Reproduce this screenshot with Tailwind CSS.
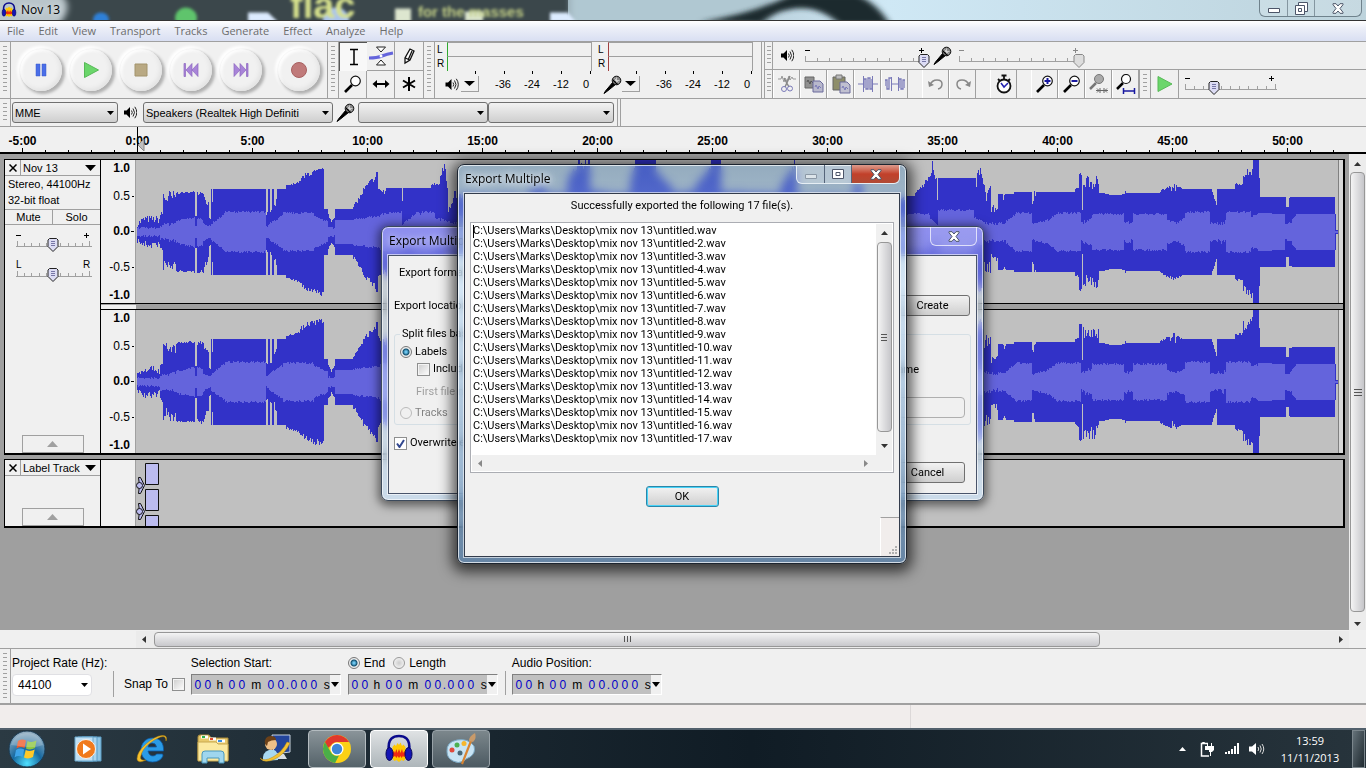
<!DOCTYPE html>
<html lang="en">
<head>
  <meta charset="UTF-8" />
  <meta name="viewport" content="width=device-width, initial-scale=1.0" />
  <title>Nov 13</title>
  <script src="https://cdn.jsdelivr.net/npm/@tailwindcss/browser@4"></script>
</head>
<body class="relative flex h-screen flex-col overflow-hidden bg-[#f0f0f0] font-['Liberation_Sans',sans-serif] text-[12px] leading-[14px] text-black">

  <!-- Shared symbols -->
  <svg class="hidden">
    <symbol id="speaker" viewBox="0 0 13 13">
      <path d="M0 4.500h2.500L6 1v11L2.500 8.500H0z" fill="#000" />
      <path d="M7.500 4.500q1.500 2 0 4M9 2.500q3 4 0 8M10.800 .8q4 5.700 0 11.400" fill="none" stroke="#222" stroke-width="1" />
    </symbol>
    <symbol id="mic" viewBox="0 0 19 19">
      <path d="M1 18.500 2.500 16 10 7l2.500 2.500L4.500 16z" fill="#000" stroke="#000" />
      <circle cx="13.500" cy="5.500" r="4.300" fill="#888" stroke="#111" />
      <path d="M10.500 5.500h6M13.500 2.500v6M11.500 3.500l4 4" stroke="#ddd" stroke-width=".8" />
      <path d="M10 5l4.500 4.500" stroke="#000" stroke-width="1.300" />
    </symbol>
    <symbol id="thumb" viewBox="0 0 12 14">
      <path d="M2.500.5h7l1.500 1.500v6.500L6 13.500 1 8.500V2z" fill="#dcdcf4" stroke="#222" />
      <path d="M4 3.500h4M4 5.500h4M4 7.500h4" stroke="#7777a8" />
    </symbol>
    <symbol id="thumb-off" viewBox="0 0 12 14">
      <path d="M2.500.5h7l1.500 1.500v6.500L6 13.500 1 8.500V2z" fill="#ddd" stroke="#888" />
    </symbol>
    <symbol id="arrow" viewBox="0 0 7 4"><path d="M0 0h7L3.500 4z" fill="#000" /></symbol>
    <symbol id="lens" viewBox="0 0 20 20">
      <path d="M2 18l7-7" stroke="#000" stroke-width="2.600" />
      <circle cx="12.500" cy="7" r="4.800" fill="#fff" stroke="#111" stroke-width="1.200" />
    </symbol>
    <symbol id="audacity" viewBox="0 0 30 30">
      <path d="M5 17C3 4 10 2 15 2s12 2 10 15" fill="none" stroke="#0a0a8c" stroke-width="2.600" />
      <path d="M8.500 13l2-2.500 1.500 1.500 1.500-3L15 11l1.500-2.500L18 12l1.500-1.500 2 2.500v12l-2 2-2-1-2.500 2-2.500-2-2 1-2-2z" fill="#ffc800" />
      <path d="M8 19l2-2 1 2 1.500-4 1 4 1.500-4 1.500 4 1.500-4 1 4 1.500-2 1 2v3l-1.500 1-1-1-1.500 2-1-2-1.500 2-1.500-2-1 2-1.500-2-2 1-1-1z" fill="#f02a10" />
      <ellipse cx="5.500" cy="20" rx="3.500" ry="6.500" fill="#1414b4" stroke="#05055a" />
      <ellipse cx="24.500" cy="20" rx="3.500" ry="6.500" fill="#1414b4" stroke="#05055a" />
    </symbol>
    <symbol id="close" viewBox="0 0 12 11">
      <path d="M1 .7h3L6 3 8 .7h3v1L8 5.500l3 3.800v1H8L6 8l-2 2.300H1v-1l3-3.800-3-3.800z" fill="#fff" stroke="#4c5568" />
    </symbol>
  </svg>

  <!-- Title bar -->
  <header class="relative flex h-[21px] shrink-0 items-center overflow-hidden border-b border-[#333] bg-linear-to-r from-[#4a565a] via-[#cfe8f5] via-65% to-[#bdd3dc]">
    <svg class="absolute inset-0 h-full w-full" viewBox="0 0 1366 21" preserveAspectRatio="none">
      <defs>
        <filter id="b3" x="-30%" y="-80%" width="160%" height="260%"><feGaussianBlur stdDeviation="3" /></filter>
        <filter id="b2" x="-30%" y="-80%" width="160%" height="260%"><feGaussianBlur stdDeviation="1.500" /></filter>
      </defs>
      <path d="M0 0h568v21H0z" fill="#3b474b" />
      <path d="M571-10h200v41H571z" fill="#b0c8d2" filter="url(#b3)" />
      <path d="M-10-10H55q25 15 0 40H-10z" fill="#b9c5ca" filter="url(#b3)" />
      <g filter="url(#b2)">
        <circle cx="101" cy="21" r="8" fill="#2f80d8" />
        <circle cx="186" cy="19" r="11" fill="#5fc46c" />
        <path d="M248 13h20l10 10h-30zM550 13h18l8 10h-26z" fill="#dcebff" />
        <circle cx="336" cy="21" r="13" fill="#a9c3ee" />
        <text x="290" y="19" font-size="38" font-weight="bold" fill="#d5e08c" font-family="Liberation Sans">flac</text>
        <path d="M395 9h16v14h-16zM465 12h18v10h-18z" fill="#dde6cf" />
        <text x="418" y="18" font-size="15" font-weight="bold" fill="#c3cf86" font-family="Liberation Sans">for the masses</text>
      </g>
      <path d="M700 23Q755 14 792-6h64q22 10 34 32h-50Q820 6 795 9q-22 3-34 16z" fill="#1f2b2e" filter="url(#b3)" />
    </svg>
    <svg class="relative ml-[1px] h-4 w-4"><use href="#audacity" /></svg>
    <h1 class="relative ml-1 font-['Open_Sans',sans-serif] text-[12px] [text-shadow:0_0_6px_#fff]">Nov 13</h1>
    <div class="relative mr-1 ml-auto flex h-[17px] self-start rounded-b-md border border-t-0 border-[#6f828c] bg-white/15">
      <button aria-label="Minimize" class="grid w-7 place-items-center border-r border-[#8496a0]"><svg class="mt-1 h-[5px] w-3"><path d="M.5.5h11v4H.5z" fill="#fff" stroke="#4c5568" /></svg></button>
      <button aria-label="Restore" class="grid w-[27px] place-items-center border-r border-[#8496a0]"><svg class="h-[13px] w-[13px]"><path d="M3.500.5h9v9h-9z" fill="#fff" stroke="#4c5568" /><path d="M.5 3.500h9v9h-9zM3.500 6.500h3v3h-3z" fill="#fff" stroke="#4c5568" /></svg></button>
      <button aria-label="Close" class="grid w-[46px] place-items-center"><svg class="h-[11px] w-3"><use href="#close" /></svg></button>
    </div>
  </header>

  <!-- Menu -->
  <nav class="flex h-[21px] shrink-0 items-center gap-[14px] border-b border-[#a0a0a0] bg-linear-to-b from-white via-[#eceff8] via-35% to-[#d9dff2] pl-[7px] font-['Open_Sans',sans-serif] text-[11px] text-[#6d6d6d]">
    <a href="#">File</a><a href="#">Edit</a><a href="#">View</a><a href="#">Transport</a><a href="#">Tracks</a><a href="#">Generate</a><a href="#">Effect</a><a href="#">Analyze</a><a href="#">Help</a>
  </nav>

  <!-- Toolbars -->
  <div class="flex h-[57px] shrink-0 border-b border-[#a0a0a0]">
    <div class="flex w-[11px] justify-center border-r border-[#a0a0a0] py-1"><i class="w-1 bg-[repeating-linear-gradient(#a0a0a0_0_1px,#f0f0f0_1px_4px)]"></i></div>
    <div id="transport" class="flex items-center border-r border-[#a0a0a0] pr-[3px] pl-[5px]"></div>
    <div class="flex w-[11px] justify-center border-r border-[#a0a0a0] py-1"><i class="w-1 bg-[repeating-linear-gradient(#a0a0a0_0_1px,#f0f0f0_1px_4px)]"></i></div>
    <div class="grid grid-cols-3 border-r border-[#a0a0a0]">
      <button aria-label="Selection tool" class="grid w-7 place-items-center border-t border-l border-[#555] bg-[#f8f8f8]"><svg class="h-5 w-5"><path d="M6 2.500h8M6 17.500h8M10 2v16" stroke="#000" stroke-width="1.500" /></svg></button>
      <button aria-label="Envelope tool" class="grid w-7 place-items-center border-r border-b border-[#a0a0a0]"><svg class="h-5 w-[26px]"><path d="M1 12q8 0 13-2t11-3" fill="none" stroke="#6464dc" stroke-width="3" /><path d="M8.500 1h9L13 6zM8.500 19h9L13 14z" fill="#fff" stroke="#222" /><circle cx="13" cy="10" r="1.500" fill="#fff" /></svg></button>
      <button aria-label="Draw tool" class="grid w-7 place-items-center border-b border-[#a0a0a0]"><svg class="h-5 w-5"><path d="M6 17V12l5-9 4 2-4 9zM6.500 12l4 2M9.500 13 13 5" fill="#fff" stroke="#111" stroke-width="1.300" /></svg></button>
      <button aria-label="Zoom tool" class="grid w-7 place-items-center border-r border-[#a0a0a0]"><svg class="h-5 w-5"><use href="#lens" /></svg></button>
      <button aria-label="Time shift tool" class="grid w-7 place-items-center border-r border-[#a0a0a0]"><svg class="h-5 w-5"><path d="M3 10h14" stroke="#000" stroke-width="2" /><path d="M1.500 10 6 6v8zM18.500 10 14 6v8z" /></svg></button>
      <button aria-label="Multi tool" class="grid w-7 place-items-center"><svg class="h-5 w-5"><path d="M10 3v14M4 6.500l12 7M4 13.500l12-7" stroke="#000" stroke-width="2" /></svg></button>
    </div>
    <div class="flex w-[11px] justify-center border-r border-[#a0a0a0] py-1"><i class="w-1 bg-[repeating-linear-gradient(#a0a0a0_0_1px,#f0f0f0_1px_4px)]"></i></div>
    <div id="meters" class="flex border-r border-[#a0a0a0] pr-[2px] pl-[2px]"></div>
    <div class="ml-[2px] flex flex-1 flex-col border-l border-[#a0a0a0]">
      <div class="flex h-7 items-center border-b border-[#a0a0a0]">
        <div class="flex w-2 justify-center self-stretch border-r border-[#a0a0a0] py-1"><i class="w-1 bg-[repeating-linear-gradient(#a0a0a0_0_1px,#f0f0f0_1px_4px)]"></i></div>
        <svg class="ml-2 h-[13px] w-[13px]"><use href="#speaker" /></svg>
        <div class="ml-2 grid">
          <svg class="col-start-1 row-start-1 h-6 w-[128px]"><path d="M3 17.500h115M3.500 12v5M15.500 14v3M27.500 14v3M39.500 14v3M51.500 14v3M63.500 14v3M75.500 14v3M87.500 14v3M99.500 14v3M111.500 14v3" stroke="#a0a0a0" /><path d="M3 6.500h5M117 6.500h5M119.500 4v5" stroke="#000" /><use href="#thumb" x="116" y="10" width="12" height="14" /></svg>
          <input type="range" aria-label="Output volume" value="100" class="col-start-1 row-start-1 w-full opacity-0" />
        </div>
        <svg class="ml-[2px] h-[19px] w-[19px]"><use href="#mic" /></svg>
        <div class="ml-1 grid">
          <svg class="col-start-1 row-start-1 h-6 w-[130px]"><path d="M3 17.500h115M3.500 12v5M15.500 14v3M27.500 14v3M39.500 14v3M51.500 14v3M63.500 14v3M75.500 14v3M87.500 14v3M99.500 14v3M111.500 14v3" stroke="#a0a0a0" /><path d="M3 6.500h5M117 6.500h5M119.500 4v5" stroke="#888" /><use href="#thumb-off" x="117" y="10" width="12" height="14" /></svg>
          <input type="range" aria-label="Input volume" value="100" disabled class="col-start-1 row-start-1 w-full opacity-0" />
        </div>
      </div>
      <div class="flex h-7">
        <div class="flex w-2 justify-center border-r border-[#a0a0a0] py-1"><i class="w-1 bg-[repeating-linear-gradient(#a0a0a0_0_1px,#f0f0f0_1px_4px)]"></i></div>
        <div id="edit" class="flex"></div>
        <div class="flex w-3 justify-center border-x border-[#a0a0a0] py-1"><i class="w-1 bg-[repeating-linear-gradient(#a0a0a0_0_1px,#f0f0f0_1px_4px)]"></i></div>
        <button aria-label="Play at speed" class="grid w-7 place-items-center border-r border-[#a0a0a0]"><svg class="h-4 w-4"><path d="M1 .5v15L15 8z" fill="#6bd66b" stroke="#57b957" /></svg></button>
        <div class="ml-1 grid">
          <svg class="col-start-1 row-start-1 h-7 w-[96px]"><path d="M2 19.500h92M2.500 14v5M11.500 16v3M20.500 16v3M29.500 16v3M38.500 16v3M47.500 16v3M56.500 16v3M65.500 16v3M74.500 16v3M83.500 16v3M92.500 14v5" stroke="#a0a0a0" /><path d="M2 8.500h5M86 8.500h5M88.500 6v5" stroke="#000" /><use href="#thumb" x="25" y="11" width="12" height="14" /></svg>
          <input type="range" aria-label="Playback speed" value="30" class="col-start-1 row-start-1 w-full opacity-0" />
        </div>
      </div>
    </div>
  </div>

  <!-- Device toolbar -->
  <div class="flex h-7 shrink-0 items-center border-b border-[#a0a0a0] text-[11px]">
    <div class="mr-[1px] flex w-[11px] justify-center self-stretch border-r border-[#a0a0a0] py-1"><i class="w-1 bg-[repeating-linear-gradient(#a0a0a0_0_1px,#f0f0f0_1px_4px)]"></i></div>
    <div class="grid items-center">
      <select aria-label="Audio host" class="col-start-1 row-start-1 h-[21px] w-[106px] appearance-none rounded-[3px] border border-[#707070] bg-linear-to-b from-[#f2f2f2] to-[#cfcfcf] pl-[2px]"><option>MME</option></select>
      <svg class="pointer-events-none col-start-1 row-start-1 mr-1 h-1 w-[7px] justify-self-end"><use href="#arrow" /></svg>
    </div>
    <svg class="mx-[6px] h-[13px] w-[13px]"><use href="#speaker" /></svg>
    <div class="grid items-center">
      <select aria-label="Output device" class="col-start-1 row-start-1 h-[21px] w-[190px] appearance-none rounded-[3px] border border-[#707070] bg-linear-to-b from-[#f2f2f2] to-[#cfcfcf] pl-[2px]"><option>Speakers (Realtek High Definiti</option></select>
      <svg class="pointer-events-none col-start-1 row-start-1 mr-1 h-1 w-[7px] justify-self-end"><use href="#arrow" /></svg>
    </div>
    <svg class="mx-[3px] h-[19px] w-[19px]"><use href="#mic" /></svg>
    <div class="grid items-center">
      <select aria-label="Input device" class="col-start-1 row-start-1 h-[21px] w-[130px] appearance-none rounded-[3px] border border-[#707070] bg-linear-to-b from-[#f2f2f2] to-[#cfcfcf]"></select>
      <svg class="pointer-events-none col-start-1 row-start-1 mr-1 h-1 w-[7px] justify-self-end"><use href="#arrow" /></svg>
    </div>
    <div class="grid items-center">
      <select aria-label="Input channels" class="col-start-1 row-start-1 h-[21px] w-[126px] appearance-none rounded-[3px] border border-[#707070] bg-linear-to-b from-[#f2f2f2] to-[#cfcfcf]"></select>
      <svg class="pointer-events-none col-start-1 row-start-1 mr-1 h-1 w-[7px] justify-self-end"><use href="#arrow" /></svg>
    </div>
    <div class="ml-[3px] w-1 self-stretch border-x border-[#a0a0a0]"></div>
  </div>

  <!-- Timeline -->
  <div class="relative h-[27px] shrink-0 overflow-hidden border-b-2 border-black">
    <div id="timeline" class="-ml-[35px] flex h-full"></div>
    <svg class="absolute top-0 left-[137px] h-full w-2"><path d="M.5 0v27" stroke="#000" /><path d="M7 12v12L1 18z" fill="#c0c0c0" stroke="#888" /></svg>
  </div>

  <!-- Tracks -->
  <main class="flex min-h-0 flex-1 bg-[#9f9f9f]">
    <div class="flex flex-1 flex-col gap-1 pt-[5px] pr-1 pl-1">
      <section class="flex h-[296px] border border-r-2 border-b-2 border-black">
        <div class="flex w-24 shrink-0 flex-col border-r border-black bg-[#f0f0f0] text-[11px]">
          <div class="flex h-4 items-center border-b border-[#a0a0a0]">
            <button aria-label="Close track" class="grid h-full w-4 place-items-center border-r border-[#a0a0a0]"><svg class="h-2 w-2"><path d="M.5.500l7 7M7.500.5l-7 7" stroke="#000" stroke-width="1.500" /></svg></button>
            <button class="flex flex-1 items-center justify-between pr-1 pl-[2px]">Nov 13 <svg class="h-[6px] w-[11px]"><path d="M0 0h11L5.500 6z" /></svg></button>
          </div>
          <p class="h-[33px] pl-[3px] leading-4">Stereo, 44100Hz<br />32-bit float</p>
          <div class="flex h-4 border-y border-[#a0a0a0] leading-[14px]"><button class="flex-1 border-r border-[#a0a0a0]">Mute</button><button class="flex-1">Solo</button></div>
          <div class="mt-[2px] ml-[10px] grid">
            <svg class="col-start-1 row-start-1 h-[30px] w-[80px]"><path d="M1 19.500h76M2.500 14v5M9.500 16v3M16.500 16v3M24.500 16v3M31.500 16v3M45.500 16v3M53.500 16v3M60.500 16v3M67.500 16v3M74.500 14v5" stroke="#a0a0a0" /><path d="M1 8.500h5M69 8.500h5M71.500 6v5" stroke="#000" /><use href="#thumb" x="32" y="11" width="12" height="14" /></svg>
            <input type="range" aria-label="Gain" class="col-start-1 row-start-1 w-full opacity-0" />
          </div>
          <div class="ml-[10px] grid">
            <svg class="col-start-1 row-start-1 h-[30px] w-[80px]" font-size="10"><text x="1" y="11">L</text><text x="68" y="11">R</text><path d="M1 19.500h76M2.500 14v5M9.500 16v3M16.500 16v3M24.500 16v3M31.500 16v3M45.500 16v3M53.500 16v3M60.500 16v3M67.500 16v3M74.500 14v5" stroke="#a0a0a0" /><use href="#thumb" x="32" y="11" width="12" height="14" /></svg>
            <input type="range" aria-label="Pan" class="col-start-1 row-start-1 w-full opacity-0" />
          </div>
          <button aria-label="Collapse track" class="mt-auto grid h-[18px] w-[62px] place-items-center self-center border border-[#a0a0a0]"><svg class="h-[6px] w-[11px]"><path d="M0 6h11L5.500 0z" fill="#a0a0a0" /></svg></button>
        </div>
        <div class="flex min-w-0 flex-1 flex-col bg-[#9f9f9f]">
          <div class="flex h-[144px] border-b border-black">
            <div class="vruler w-[35px] shrink-0 border-r border-[#a0a0a0] bg-[#f0f0f0]"></div>
            <svg class="wave h-full min-w-0 flex-1 bg-[#c0c0c0]" viewBox="136 0 1207 143" preserveAspectRatio="none" shape-rendering="crispEdges"></svg>
          </div>
          <div class="h-[5px]"><div class="h-full w-[35px] border-t border-[#a0a0a0] bg-[#f0f0f0]"></div></div>
          <div class="flex min-h-0 flex-1 border-t border-black">
            <div class="vruler w-[35px] shrink-0 border-r border-[#a0a0a0] bg-[#f0f0f0]"></div>
            <svg class="wave h-full min-w-0 flex-1 bg-[#c0c0c0]" viewBox="136 0 1207 143" preserveAspectRatio="none" shape-rendering="crispEdges"></svg>
          </div>
        </div>
      </section>
      <section class="flex h-[69px] border border-r-2 border-b-2 border-black">
        <div class="flex w-24 shrink-0 flex-col border-r border-black bg-[#f0f0f0] text-[11px]">
          <div class="flex h-4 items-center border-b border-[#a0a0a0]">
            <button aria-label="Close track" class="grid h-full w-4 place-items-center border-r border-[#a0a0a0]"><svg class="h-2 w-2"><path d="M.5.500l7 7M7.500.5l-7 7" stroke="#000" stroke-width="1.500" /></svg></button>
            <button class="flex flex-1 items-center justify-between pr-1 pl-[2px] whitespace-nowrap">Label Track <svg class="h-[6px] w-[11px]"><path d="M0 0h11L5.500 6z" /></svg></button>
          </div>
          <button aria-label="Collapse track" class="mt-auto grid h-[18px] w-[62px] place-items-center self-center border border-[#a0a0a0]"><svg class="h-[6px] w-[11px]"><path d="M0 6h11L5.500 0z" fill="#a0a0a0" /></svg></button>
        </div>
        <div class="w-[35px] border-r border-[#a0a0a0] bg-[#f0f0f0]"></div>
        <div class="flex-1 bg-[#c0c0c0]">
          <svg class="h-full w-6" fill="#bcbcf0" stroke="#111">
            <path d="M9.500 3.500h13v21h-13zM9.500 29.500h13v21h-13zM9.500 55.500h13v21h-13z" />
            <path d="M2.500 17.500h2l4 8-4 8h-2l1-8zM2.500 43.500h2l4 8-4 8h-2l1-8z" /><circle cx="3.500" cy="25.500" r="3" /><circle cx="3.500" cy="51.500" r="3" />
          </svg>
        </div>
      </section>
    </div>
    <div class="flex w-[17px] flex-col items-center bg-[#ececec]">
      <svg class="mt-2 h-[4px] w-[7px]"><path d="M0 4h7L3.500 0z" fill="#333" /></svg>
      <div class="mt-[6px] flex h-[440px] w-[15px] flex-col items-center justify-center gap-[2px] rounded-sm border border-[#979797] bg-linear-to-r from-[#f4f4f4] to-[#c6c6ca]"><i class="h-px w-2 bg-[#555]"></i><i class="h-px w-2 bg-[#555]"></i><i class="h-px w-2 bg-[#555]"></i></div>
      <svg class="mt-auto mb-1 h-[4px] w-[7px]"><path d="M0 0h7L3.500 4z" fill="#333" /></svg>
    </div>
  </main>

  <!-- Horizontal scroll -->
  <div class="flex h-[19px] shrink-0 items-center border-b border-[#a0a0a0] pr-[17px] pl-[136px]">
    <div class="flex h-[17px] flex-1 items-center bg-[#ebebeb]">
      <svg class="mx-[6px] h-[7px] w-1"><path d="M4 0v7L0 3.500z" fill="#333" /></svg>
      <div class="ml-[2px] flex h-[15px] w-[78%] items-center justify-center gap-[2px] rounded-sm border border-[#979797] bg-linear-to-b from-[#f4f4f4] to-[#c8c8cc]"><i class="h-[6px] w-px bg-[#555]"></i><i class="h-[6px] w-px bg-[#555]"></i><i class="h-[6px] w-px bg-[#555]"></i></div>
      <svg class="mr-[6px] ml-auto h-[7px] w-1"><path d="M0 0v7l4-3.500z" fill="#333" /></svg>
    </div>
  </div>

  <!-- Selection toolbar -->
  <div class="flex h-[56px] shrink-0 border-b-2 border-[#a0a0a0]">
    <div class="mr-[1px] flex w-[11px] justify-center border-r border-[#a0a0a0] py-1"><i class="w-1 bg-[repeating-linear-gradient(#a0a0a0_0_1px,#f0f0f0_1px_4px)]"></i></div>
    <div class="w-[101px] pt-[7px]">
      <label for="rate" class="block whitespace-nowrap">Project Rate (Hz):</label>
      <div class="mt-1 grid w-20 items-center">
        <select id="rate" class="col-start-1 row-start-1 h-[22px] w-full appearance-none rounded-sm border border-[#e0e0e4] bg-white pl-[5px]"><option>44100</option></select>
        <svg class="pointer-events-none col-start-1 row-start-1 mr-1 h-1 w-[7px] justify-self-end"><use href="#arrow" /></svg>
      </div>
    </div>
    <div class="mt-[22px] mr-[6px] mb-[6px] flex items-center gap-1 border-l border-[#a0a0a0] pl-[10px]"><label for="snap" class="whitespace-nowrap">Snap To</label><input id="snap" type="checkbox" class="h-[13px] w-[13px] appearance-none border border-[#8e8f8f] bg-linear-to-br from-[#ccc] to-white shadow-[inset_0_0_0_1px_#f4f4f4]" /></div>
    <div class="pt-[7px]"><p>Selection Start:</p><div class="timebox mt-[4px]" data-label="Selection start"></div></div>
    <div class="ml-[7px] pt-[7px]">
      <div class="flex h-[14px] items-center">
        <input id="end" name="range" type="radio" checked class="h-3 w-3 appearance-none rounded-full border border-[#777] bg-[radial-gradient(circle,#6cc5ee_0_1px,#12506f_3px,#eee_4px)]" /><label for="end" class="mr-2 ml-1">End</label>
        <input id="length" name="range" type="radio" class="h-3 w-3 appearance-none rounded-full border border-[#999] bg-radial from-[#ccc] to-white" /><label for="length" class="ml-1">Length</label>
      </div>
      <div class="timebox mt-[4px]" data-label="End"></div>
    </div>
    <div class="mt-[22px] mr-[6px] mb-2 ml-[7px] w-px bg-[#a0a0a0]"></div>
    <div class="pt-[7px]"><p>Audio Position:</p><div class="timebox mt-[4px]" data-label="Audio position"></div></div>
  </div>

  <!-- Status bar -->
  <footer class="flex h-[23px] shrink-0 bg-[#f1edec]"><div class="w-2/3 border-r border-[#dcd8d8]"></div></footer>

  <!-- Taskbar -->
  <div class="flex h-10 shrink-0 items-center border-t-2 border-[#52606c] bg-linear-to-r from-[#2b3a43] via-[#101c25] via-55% to-[#27343c] pl-2 text-white">
    <button aria-label="Start" class="h-[38px] w-[38px]">
      <svg viewBox="0 0 38 38">
        <defs><radialGradient id="orb" cx=".5" cy=".9" r=".9"><stop offset="0" stop-color="#4fe0ff" /><stop offset=".45" stop-color="#1769a0" /><stop offset="1" stop-color="#9db4c4" /></radialGradient></defs>
        <circle cx="19" cy="19" r="18" fill="url(#orb)" stroke="#1b3a52" />
        <path d="M10 11q4-2.500 8-.5l-1.500 7.500q-4-2-8 .5z" fill="#ee5a2a" />
        <path d="M19.500 11q4 2 9-.5L27 18q-4.500 2.500-9 .5z" fill="#8cc63f" />
        <path d="M8 20q4-2.500 8.200-.5L14.500 27q-4-2-8 .5z" fill="#3fa4e8" />
        <path d="M17.700 20q4.500 2 9-.5L25 27q-4.500 2.500-9 .5z" fill="#ffc928" />
        <path d="M3 15Q7 3 19 3t16 12q-8 3-16 2T3 15z" fill="#fff" opacity=".22" />
      </svg>
    </button>
    <button aria-label="Media Player" class="ml-[28px] h-7 w-7">
      <svg viewBox="0 0 28 28"><path d="M8 2h19v24H8z" fill="#8cc4e4" stroke="#5a9cc4" /><path d="M4 2h19v24H4z" fill="#a8d4ee" stroke="#5a9cc4" /><path d="M1 2h18v24H1z" fill="#bfe0f4" stroke="#6aa8cc" /><circle cx="12" cy="14" r="9.500" fill="#f07a1c" stroke="#fff" stroke-width=".8" /><path d="M9 8.500v11l8-5.500z" fill="#fff" /></svg>
    </button>
    <button aria-label="Internet Explorer" class="ml-[33px] h-8 w-8">
      <svg viewBox="0 0 32 32"><path d="M28 23q-3 6-10.500 6C10 29 6 23 6 17S10 5 17.500 5s11.500 5 11 13H13q1 5 5 5 2.500 0 3.500-2h6zM13 14h8.500Q21 10 17 10t-4 4z" fill="#2a9be6" stroke="#0c5ca8" stroke-width=".8" fill-rule="evenodd" /><path d="M31 8q2-6-4-5.500Q20 3 11 11T2 26q1 5 9 1Q5 28 5.500 24 7 16 15 10T28 3.500q3 0 3 4.500z" fill="#f6c02e" stroke="#b8860b" stroke-width=".5" /></svg>
    </button>
    <button aria-label="Explorer" class="ml-[30px] h-8 w-8">
      <svg viewBox="0 0 32 32"><path d="M1 4q0-2 2-2h9l2 3h17v22H1z" fill="#e8c96a" stroke="#a88a3c" /><path d="M4 4h7M12 6h7M20 8h8" stroke="#fff" stroke-width="3" /><path d="M5 4h3" stroke="#2fb04c" stroke-width="2" /><path d="M13 6h3" stroke="#e04a2c" stroke-width="2" /><path d="M21 8h4" stroke="#3a8ee0" stroke-width="2" /><path d="M1 9h18l2 2h10v17H1z" fill="#fbe9a0" stroke="#c8a850" /><path d="M5 30V21q0-3 3-3h16q3 0 3 3v9h-5v-5H10v5z" fill="#9fd6ee" stroke="#4a98bc" /></svg>
    </button>
    <button aria-label="Messenger" class="ml-[30px] h-8 w-8">
      <svg viewBox="0 0 32 32"><path d="M13 2h18v17l-16 2z" fill="#23459c" stroke="#c8d4e0" /><path d="M19 21h6l3 5H17z" fill="#d8dee4" /><path d="M4 28q-1-9 6-11h5q4 1 4 10z" fill="#a8d8f0" /><circle cx="12" cy="11" r="6" fill="#eebf88" /><path d="M6 11q-1-8 6-8 5 0 5 4-5 0-8 2l-1 4z" fill="#6b4018" /><path d="M1 25q4 4 13-1T28 9l3 1q-5 11-15 16-11 5-15-1z" fill="#f4c232" stroke="#b88a18" stroke-width=".5" /></svg>
    </button>
    <div class="ml-[17px] flex gap-1">
      <button aria-label="Chrome" class="grid h-[38px] w-[58px] place-items-center rounded-sm border border-[#b4bcc0] bg-linear-to-b from-[#8a9499] to-[#55636a]">
        <svg class="h-[30px] w-[30px]" viewBox="0 0 30 30"><circle cx="15" cy="15" r="14" fill="#fbd116" /><path d="M2.900 8A14 14 0 0 1 27.100 8H15a7 7 0 0 0-6.100 3.500L6 14z" fill="#e0382c" /><path d="M2.900 8 9 18.500a7 7 0 0 0 8 3L13 28.900A14 14 0 0 1 2.900 8z" fill="#4aae48" /><circle cx="15" cy="15" r="6.500" fill="#fff" /><circle cx="15" cy="15" r="5.200" fill="#3d86d8" /></svg>
      </button>
      <button aria-label="Audacity" class="grid h-[38px] w-[58px] place-items-center rounded-sm border border-white bg-linear-to-b from-[#dfe2e4] to-[#aeb6ba]"><svg class="h-[30px] w-[30px]"><use href="#audacity" /></svg></button>
      <button aria-label="Paint" class="grid h-[38px] w-[58px] place-items-center rounded-sm border border-[#98a2a8] bg-linear-to-b from-[#7c878c] to-[#4c5a62]">
        <svg class="h-8 w-8" viewBox="0 0 32 32"><path d="M2 19Q1 9 12 7t17 6q2 7-4 11-5 2-6 4-6 3-11 0-6-3-6-9z" fill="#c8e4f4" stroke="#7aa8c4" /><circle cx="7" cy="17" r="2.500" fill="#e04a3c" /><circle cx="12" cy="12" r="2.500" fill="#4cb050" /><circle cx="19" cy="10.500" r="2.500" fill="#f6b62c" /><circle cx="15" cy="20" r="2.500" fill="#486878" /><path d="M17 31 26 8" stroke="#d88432" stroke-width="2.200" /><path d="M24 8q0-5 6-8 2 5-2 9z" fill="#c89a6a" /></svg>
      </button>
    </div>
    <svg class="mr-[14px] ml-auto h-1 w-[7px]"><path d="M0 4h7L3.500 0z" fill="#fff" /></svg>
    <svg class="mr-[10px] h-[15px] w-[15px]" viewBox="0 0 15 15"><path d="M8 1.500H4V.5H3v1H1.500V14H9" fill="none" stroke="#fff" stroke-width="1.500" /><path d="M5 4h9v4l-2 2H9V8H5zM7 1h1v3H7zM11 1h1v3h-1zM10 10h1v4h-1z" fill="#fff" /></svg>
    <svg class="mr-[9px] h-3 w-[15px]" fill="#fff"><path d="M0 9h2v2H0zM3 8h2v3H3zM6 6h2v5H6zM9 3h2v8H9zM12 0h2v11h-2z" /></svg>
    <svg class="mr-[14px] h-[14px] w-4" viewBox="0 0 16 14"><path d="M0 4.500h3L7 1v12L3 9.500H0z" fill="#fff" /><path d="M9 5q1.500 2 0 4M11 3.500q2.500 3.500 0 7M13 2q3.500 5 0 10" fill="none" stroke="#ddd" /></svg>
    <div class="w-[62px] text-center font-['Open_Sans',sans-serif] text-[11px] leading-[17px]">13:59<br />11/11/2013</div>
    <button aria-label="Show desktop" class="mr-px ml-[11px] h-[38px] w-[13px] border border-[#7b868c] bg-linear-to-br from-[#66737a] to-[#1f2a30]"></button>
  </div>

  <!-- Export options dialog -->
  <div class="absolute top-[226px] left-[381px] flex h-[275px] w-[603px] flex-col rounded-[7px] border border-[#3c4a5c] bg-linear-to-b from-[#b4b4ff]/55 via-[#cfe6fb]/30 via-15% to-[#cfe6fb]/70 px-[6px] pb-[6px] font-[Roboto,sans-serif] text-[11px] shadow-[0_2px_10px_3px_rgba(0,0,0,0.5),inset_0_0_0_1px_rgba(255,255,255,0.6)] backdrop-blur-[5px]">
    <div class="flex h-7 shrink-0 items-center font-['Open_Sans',sans-serif] text-[12px]">
      <h2 class="ml-px [text-shadow:0_0_6px_#fff]">Export Multiple</h2>
      <button aria-label="Close" class="ml-auto grid h-[19px] w-[47px] place-items-center self-start rounded-b-md border border-t-0 border-white/70 bg-white/10"><svg class="h-[11px] w-3"><use href="#close" /></svg></button>
    </div>
    <div class="flex flex-1 flex-col border border-[#49546a] bg-[#f0f0f0] shadow-[0_0_0_1px_rgba(255,255,255,0.6)]">
      <p class="mt-[10px] ml-[10px]">Export format:</p>
      <div class="mt-[15px] mr-[6px] flex h-[21px] items-center justify-between pl-[5px]"><p>Export location:</p><button class="h-full w-[75px] rounded-[3px] border border-[#707070] bg-linear-to-b from-[#f2f2f2] to-[#cfcfcf]">Create</button></div>
      <fieldset class="mx-[5px] mt-[11px] flex h-[98px] justify-between rounded-[3px] border border-[#d5dfe5] px-[5px]">
        <legend class="h-[14px] px-[2px]">Split files based on:</legend>
        <div>
          <div class="mt-[4px] flex items-center gap-[3px]"><input id="labels" name="split" type="radio" checked class="h-3 w-3 appearance-none rounded-full border border-[#777] bg-[radial-gradient(circle,#6cc5ee_0_1px,#12506f_3px,#eee_4px)]" /><label for="labels">Labels</label></div>
          <div class="mt-[3px] ml-[17px] flex items-center gap-[3px]"><input id="include" type="checkbox" class="h-[13px] w-[13px] appearance-none border border-[#8e8f8f] bg-linear-to-br from-[#ccc] to-white shadow-[inset_0_0_0_1px_#f4f4f4]" /><label for="include">Include audio before first label</label></div>
          <p class="mt-[9px] ml-[16px] text-[#a0a0a0]">First file name:</p>
          <div class="mt-[7px] flex items-center gap-[3px] text-[#838383]"><input id="tracks" name="split" type="radio" disabled class="h-3 w-3 appearance-none rounded-full border border-[#bbb]" /><label for="tracks">Tracks</label></div>
        </div>
        <div class="flex w-[280px] flex-col items-end"><label for="prefix" class="mt-[22px] w-full pr-[46px] text-right">Using Label/Track Name</label><input id="prefix" disabled class="mt-5 h-[21px] w-[150px] rounded-sm border border-[#afafaf]" /></div>
      </fieldset>
      <div class="mt-[11px] ml-[5px] flex items-center gap-[3px]">
        <span class="grid place-items-center"><input id="overwrite" type="checkbox" checked class="col-start-1 row-start-1 h-[13px] w-[13px] appearance-none border border-[#8e8f8f] bg-white" /><svg class="pointer-events-none col-start-1 row-start-1 h-[9px] w-[9px]"><path d="M1 4.500 3.500 8 8 1" fill="none" stroke="#31478f" stroke-width="2" /></svg></span>
        <label for="overwrite">Overwrite existing files</label>
      </div>
      <button class="mt-3 mr-[11px] h-[21px] w-[75px] self-end rounded-[3px] border border-[#707070] bg-linear-to-b from-[#f2f2f2] to-[#cfcfcf]">Cancel</button>
    </div>
  </div>

  <!-- Export result dialog -->
  <div class="absolute top-[164px] left-[457px] flex h-[400px] w-[450px] flex-col rounded-[7px] border border-[#1d2530] bg-linear-to-b from-[#5f93bd]/45 via-[#b8dcfa]/50 via-30% to-[#4f7ba8]/70 px-[6px] pb-[6px] font-[Roboto,sans-serif] text-[11px] shadow-[0_3px_14px_5px_rgba(0,0,0,0.65),inset_0_0_0_1px_rgba(255,255,255,0.7)] backdrop-blur-[5px]">
    <div class="flex h-7 shrink-0 items-center font-['Open_Sans',sans-serif] text-[12px]">
      <h2 class="ml-[1px] [text-shadow:0_0_6px_#fff,0_0_10px_#fff]">Export Multiple</h2>
      <div class="ml-auto flex h-[19px] self-start overflow-hidden rounded-b-md border border-t-0 border-[#e6eef4] bg-white/30">
        <button aria-label="Minimize" disabled class="grid w-7 place-items-center border-r border-[#56657a]"><svg class="mt-1 h-[5px] w-3"><path d="M.5.5h11v4H.5z" fill="#dce4ea" stroke="#8b98a6" /></svg></button>
        <button aria-label="Maximize" class="grid w-[27px] place-items-center border-r border-[#56657a]"><svg class="h-[10px] w-3"><path d="M.5.5h11v9H.5zM4 3.500h4v3H4z" fill="#fff" stroke="#4c5568" /></svg></button>
        <button aria-label="Close" class="grid w-[47px] place-items-center bg-linear-to-b from-[#dc9a8c] via-[#c2402a] to-[#b04a34]"><svg class="h-[11px] w-3"><use href="#close" /></svg></button>
      </div>
    </div>
    <div class="flex flex-1 flex-col border border-[#333c4c] bg-[#f0f0f0] shadow-[0_0_0_1px_rgba(255,255,255,0.6)]">
      <label for="files" class="mt-[5px] self-center">Successfully exported the following 17 file(s).</label>
      <div class="relative mx-[5px] mt-[9px] flex h-[251px] flex-col border border-[#abadb3] bg-white p-[1px]">
        <i class="absolute top-[2px] left-[2px] h-[13px] w-px bg-black"></i>
        <div class="flex flex-1">
          <textarea id="files" wrap="off" class="flex-1 resize-none overflow-hidden pl-[1px] leading-[13px] outline-none">C:\Users\Marks\Desktop\mix nov 13\untitled.wav
C:\Users\Marks\Desktop\mix nov 13\untitled-2.wav
C:\Users\Marks\Desktop\mix nov 13\untitled-3.wav
C:\Users\Marks\Desktop\mix nov 13\untitled-4.wav
C:\Users\Marks\Desktop\mix nov 13\untitled-5.wav
C:\Users\Marks\Desktop\mix nov 13\untitled-6.wav
C:\Users\Marks\Desktop\mix nov 13\untitled-7.wav
C:\Users\Marks\Desktop\mix nov 13\untitled-8.wav
C:\Users\Marks\Desktop\mix nov 13\untitled-9.wav
C:\Users\Marks\Desktop\mix nov 13\untitled-10.wav
C:\Users\Marks\Desktop\mix nov 13\untitled-11.wav
C:\Users\Marks\Desktop\mix nov 13\untitled-12.wav
C:\Users\Marks\Desktop\mix nov 13\untitled-13.wav
C:\Users\Marks\Desktop\mix nov 13\untitled-14.wav
C:\Users\Marks\Desktop\mix nov 13\untitled-15.wav
C:\Users\Marks\Desktop\mix nov 13\untitled-16.wav
C:\Users\Marks\Desktop\mix nov 13\untitled-17.wav</textarea>
          <div class="flex w-4 flex-col items-center bg-[#f0f0f0]">
            <svg class="mt-[7px] h-1 w-[7px]"><path d="M0 4h7L3.500 0z" fill="#333" /></svg>
            <div class="mt-[7px] flex h-[190px] w-[15px] flex-col items-center justify-center gap-[2px] rounded-sm border border-[#979797] bg-linear-to-r from-[#f4f4f4] to-[#c6c6ca]"><i class="h-px w-[6px] bg-[#555]"></i><i class="h-px w-[6px] bg-[#555]"></i><i class="h-px w-[6px] bg-[#555]"></i></div>
            <svg class="mt-auto mb-[7px] h-1 w-[7px]"><path d="M0 0h7L3.500 4z" fill="#333" /></svg>
          </div>
        </div>
        <div class="flex h-4 items-center justify-between bg-[#f0f0f0] pr-6 pl-[6px]">
          <svg class="h-[7px] w-1"><path d="M4 0v7L0 3.500z" fill="#888" /></svg><svg class="h-[7px] w-1"><path d="M0 0v7l4-3.500z" fill="#888" /></svg>
        </div>
      </div>
      <button class="mt-[13px] h-[21px] w-[73px] self-center rounded-[3px] border border-[#2c86a8] bg-linear-to-b from-[#f2f2f2] to-[#cfcfcf] shadow-[inset_0_0_0_1px_#48d3f8]">OK</button>
      <div class="mt-auto flex h-[39px] w-[19px] items-end justify-end self-end border-t border-l border-t-[#a0a0a0] border-l-white bg-[#f1edec] p-[2px]"><svg class="h-2 w-2" fill="#b0b0b0"><path d="M6 0h2v2H6zM3 3h2v2H3zM6 3h2v2H6zM0 6h2v2H0zM3 6h2v2H3zM6 6h2v2H6z" /></svg></div>
    </div>
  </div>

  <script>
    // transport buttons
    const transport = [
      ['Pause', '<path d="M3 2h4v12H3zM9 2h4v12H9z" fill="#4a6ee8" stroke="#3a58c8" stroke-width=".5"/>'],
      ['Play', '<path d="M1.500.5v15L15.500 8z" fill="#6bd66b" stroke="#57b957"/>'],
      ['Stop', '<path d="M2 2h12v12H2z" fill="#b9a983" stroke="#a3946c"/>'],
      ['Skip to start', '<path d="M1 1.500h1.500v13H1zM9 1.500v13L3 8zM15 1.500v13L9 8z" fill="#a884d8" stroke="#8c66c0" stroke-width=".7"/>'],
      ['Skip to end', '<path d="M13.500 1.500H15v13h-1.500zM7 1.500v13L13 8zM1 1.500v13L7 8z" fill="#a884d8" stroke="#8c66c0" stroke-width=".7"/>'],
      ['Record', '<circle cx="8" cy="8" r="7.500" fill="#c07a7a" stroke="#a86060"/>']
    ];
    document.getElementById('transport').innerHTML = transport.map(([name, icon], i) =>
      `<button aria-label="${name}" class="${i === 5 ? 'ml-2 grid w-[50px] place-items-center' : 'grid w-[50px] place-items-center'}"><span class="grid h-[42px] w-[42px] place-items-center rounded-full bg-[#f1f1f1] shadow-[2px_2px_3px_1px_#b0b0b0,-1px_-1px_3px_2px_#ffffff,inset_-2px_-2px_4px_#e2e2e2,inset_2px_2px_3px_#ffffff]"><svg class="h-4 w-4">${icon}</svg></span></button>`).join('');

    // level meters
    document.getElementById('meters').innerHTML = [['speaker', '#2faa2f', 'Output'], ['mic', '#a04040', 'Input']].map(([icon, color, name]) => `
      <div class="w-[161px] text-[11px]">
        <div class="flex h-[14px]"><span class="w-[10px] text-[10px] leading-4">L</span><div class="w-[145px] border-t border-r border-l border-t-[#a0a0a0] border-r-[#a0a0a0]" style="border-left-color:${color}"></div></div>
        <div class="flex h-[15px]"><span class="w-[10px] text-[10px] leading-4">R</span><div class="w-[145px] border-t border-r border-l border-t-[#a0a0a0] border-r-[#a0a0a0]" style="border-left-color:${color}"></div></div>
        <svg class="block h-1 w-[161px]"><path d="M38.500 0v3M67.500 0v3M95.500 0v3M124.500 0v3M153.500 0v3" stroke="#000"/></svg>
        <div class="flex h-[18px] items-center pl-[5px]"><svg class="${icon === 'mic' ? 'h-[19px] w-[19px]' : 'ml-[1px] h-[13px] w-[18px]'}"><use href="#${icon}"/></svg>
        <button aria-label="${name} meter menu" class="grid h-4 w-[18px] place-items-center border-r border-b border-[#a0a0a0]"><svg class="h-[5px] w-[11px]"><path d="M0 0h11L5.500 5z"/></svg></button>
        <span class="ml-4 w-[29px]">-36</span><span class="w-[29px]">-24</span><span class="w-[30px]">-12</span><span>0</span></div>
      </div>`).join('');

    // edit toolbar, null is a gap
    const edit = [
      ['Cut', '<path d="M1 5h3l1-3 2 6 1-4 2 3 2-5 1 4 2-3 1 2h3" fill="none" stroke="#999"/><path d="M13 2 8 13M7 4l5 9" stroke="#888" stroke-width="1.500"/><circle cx="7" cy="15" r="2.500" fill="none" stroke="#7a7ab8"/><circle cx="13" cy="14.500" r="2.500" fill="none" stroke="#7a7ab8"/>'],
      ['Copy', '<path d="M1 3h9v11H1z" fill="#909090" stroke="#666"/><path d="M3 8l1-2 2 4 1-3 2 2" fill="none" stroke="#555"/><path d="M9 7h7l3 3v8H9z" fill="#b8b8cc" stroke="#6a6a9c"/><path d="M11 13l1-2 2 4 1-3 2 2" fill="none" stroke="#7a7ab8"/>'],
      ['Paste', '<path d="M2 3h12v13H2z" fill="#8e8e6a" stroke="#666"/><path d="M5 1h6v4H5z" fill="#bbb" stroke="#777"/><path d="M9 8h7l3 3v8H9z" fill="#c0c0d0" stroke="#6a6a9c"/><path d="M11 14l1-2 2 4 1-3 2 2" fill="none" stroke="#7a7ab8"/>'],
      ['Trim', '<path d="M0 10h5M15 10h5M5.500 2v16M14.500 2v16" stroke="#7a7ab8"/><path d="M6 14V5h2v10h2V4h2v11h2V5" fill="none" stroke="#7a7ab8" stroke-width="1.300"/>'],
      ['Silence', '<path d="M7 10h6M6.500 3v14M13.500 3v14" stroke="#7a7ab8"/><path d="M0 12V6h2v9h2V4h2M14 14V5h2v10h2V6h2v8" fill="none" stroke="#7a7ab8" stroke-width="1.300"/>'],
      null,
      ['Undo', '<path d="M4 11q2-5 7-5t5 4-4 5" fill="none" stroke="#888" stroke-width="1.500"/><path d="M2 7l1 6 5-2z" fill="#888"/>'],
      ['Redo', '<path d="M16 11q-2-5-7-5t-5 4 4 5" fill="none" stroke="#888" stroke-width="1.500"/><path d="M18 7l-1 6-5-2z" fill="#888"/>'],
      null,
      ['Sync lock', '<circle cx="10" cy="12" r="6.500" fill="#fff" stroke="#111" stroke-width="1.800"/><path d="M10 2v4M7.500 1.500h5M4 5l2 2M16 5l-2 2" stroke="#111" stroke-width="1.800"/><path d="M7 9l3 4 4-4" fill="none" stroke="#2020b0" stroke-width="1.500"/>'],
      null,
      ['Zoom in', '<use href="#lens"/><path d="M9.500 7h6M12.500 4v6" stroke="#1818a0" stroke-width="2"/>'],
      ['Zoom out', '<use href="#lens"/><path d="M9.500 7h6" stroke="#1818a0" stroke-width="2"/>'],
      ['Fit selection', '<path d="M1 15l6-6" stroke="#777" stroke-width="2.500"/><circle cx="10" cy="5" r="4.500" fill="#aaa" stroke="#777"/><path d="M7 16.500h12M11 14v5M15 14v5M8 14.500l2 2-2 2M18 14.500l-2 2 2 2" fill="none" stroke="#666"/>'],
      ['Fit project', '<path d="M1 15l6-6" stroke="#000" stroke-width="2.500"/><circle cx="10" cy="5" r="4.500" fill="#fff" stroke="#111" stroke-width="1.200"/><path d="M7 17h12M7.500 14v6M18.500 14v6" stroke="#1818a0" stroke-width="1.500"/>']
    ];
    document.getElementById('edit').innerHTML = edit.map(b => b
      ? `<button aria-label="${b[0]}" class="grid w-[27px] place-items-center border-r border-[#a0a0a0] border-l border-l-white"><svg class="h-5 w-5">${b[1]}</svg></button>`
      : '<span class="w-[14px]"></span>').join('');

    // timeline
    let marks = '';
    for (let m = -5; m <= 50; m += 5) {
      marks += `<div class="flex w-[115px] shrink-0 flex-col items-center text-[12px] font-bold"><span class="mt-[7px]">${m}:00</span><svg class="mt-auto h-1 w-full"><path d="M11.500 2v2M34.500 2v2M57.500 0v4M80.500 2v2M103.500 2v2" stroke="#000"/></svg></div>`;
    }
    document.getElementById('timeline').innerHTML = marks;

    // amplitude rulers
    document.querySelectorAll('.vruler').forEach(el => {
      el.innerHTML = `
        <div class="flex flex-col pt-px text-[12px] leading-[14px]">
          <div class="pr-[5px] text-right font-bold">1.0</div>
          <div class="mt-[14px] flex items-center justify-end gap-[2px] pr-px">0.5<i class="h-px w-[2px] bg-black"></i></div>
          <div class="mt-[21px] flex items-center justify-end gap-px pr-px font-bold">0.0<i class="h-px w-[3px] bg-black"></i></div>
          <div class="mt-[22px] flex items-center justify-end gap-[2px] pr-px">-0.5<i class="h-px w-[2px] bg-black"></i></div>
          <div class="mt-[14px] pr-[5px] text-right font-bold">-1.0</div>
        </div>`;
    });

    // [from, to, start, end, jitter]
    const peaks = [
      [137,145,8,14,3],[145,160,13,12,4],[160,163,17,20,2],[163,164,38,38,0],[164,176,34,34,8],[176,195,39,40,1],[195,197,16,16,0],
      [197,204,39,40,2],[204,209,34,26,3],[209,211,14,12,0],[211,212,43,43,0],[212,213,30,30,0],[213,266,43,43,0],[266,268,17,20,2],[268,270,43,43,0],
      [270,272,20,24,3],[272,274,43,43,0],[274,277,24,32,4],[277,286,43,43,0],[286,300,46,50,1],[300,308,53,58,3],[308,324,58,62,3],
      [324,328,23,23,0],[328,331,17,11,1],[331,335,11,16,1],[335,353,23,23,0],[353,363,25,40,2],[363,376,42,56,3],[376,378,60,60,0],[378,382,44,40,2],
      [382,386,40,40,4],[386,402,44,44,0],[402,403,31,31,0],[403,431,44,44,0],[431,440,48,48,1],[440,446,56,66,6],[446,448,54,40,3],[448,453,22,30,3],[453,458,38,36,4],
      [458,530,36,36,3],[530,545,44,46,4],[545,567,38,38,2],[567,578,52,68,3],[578,580,72,72,0],[580,585,66,66,3],[585,586,72,72,0],[586,588,66,66,0],[588,590,72,72,0],
      [590,612,42,38,1],[612,630,38,38,1],[630,635,50,66,2],[635,656,72,72,0],[656,672,60,44,2],[672,695,40,40,2],[695,711,46,66,2],[711,721,72,72,0],
      [721,780,40,38,1],[780,794,46,66,2],[794,797,72,50,0],[797,854,36,36,2],[854,862,50,50,3],[862,906,32,34,2],
      [906,915,36,36,0],[915,925,40,48,2],[925,932,50,60,4],[932,933,71,71,0],[933,937,58,50,6],[937,938,32,32,0],[938,976,54,54,0],[976,977,45,45,0],
      [977,981,58,62,3],[981,984,58,46,2],[984,991,40,36,10],[991,998,22,27,4],[998,1003,38,38,0],[1003,1006,35,35,3],[1006,1014,38,38,0],[1014,1032,40,40,0],
      [1032,1034,30,30,2],[1034,1036,39,36,3],[1036,1075,40,40,0],[1075,1079,43,45,1],[1079,1082,59,57,1],[1082,1083,22,22,0],[1083,1099,50,50,7],
      [1099,1109,39,38,0],[1109,1122,37,37,0],[1122,1125,38,38,0],[1125,1126,41,41,0],[1126,1160,39,39,0],[1160,1170,41,46,1],[1170,1176,44,44,5],[1176,1182,46,43,1],[1182,1212,43,43,0],
      [1212,1217,40,24,1],[1217,1235,43,43,0],[1235,1243,48,48,1],[1243,1253,56,62,5],[1253,1259,72,72,0],[1259,1260,54,54,0],[1260,1286,35,35,0],[1286,1289,25,25,0],
      [1289,1292,34,34,1],[1292,1335,35,35,0],[1335,1336,18,18,0],[1336,1338,2,1,0]
    ];
    const rms = [
      [137,160,4,4,1],[160,176,7,9,2],[176,195,11,15,1],[195,197,6,6,0],[197,203,14,13,1],[203,211,9,5,1],[211,225,8,19,1],[225,266,20,20,1],[266,270,5,8,1],
      [270,283,9,17,1],[283,314,19,19,1],[314,328,16,10,1],[328,335,5,4,1],[335,353,12,12,0],[353,380,13,16,1],[380,402,18,20,1],[402,415,8,18,1],[415,435,19,20,2],[435,458,14,8,2],
      [458,906,16,16,3],[906,930,18,18,1],[930,938,14,6,1],[938,974,22,22,1],[974,983,14,12,1],[983,998,10,8,2],[998,1006,9,9,1],[1006,1015,11,18,1],[1015,1032,19,19,1],
      [1032,1048,8,12,1],[1048,1056,12,18,1],[1056,1081,19,19,1],[1081,1092,9,14,2],[1092,1124,18,18,1],[1124,1133,10,9,2],[1133,1167,18,18,1],[1167,1176,12,9,1],[1176,1185,9,14,1],
      [1185,1210,20,20,1],[1210,1217,9,8,1],[1217,1226,9,10,3],[1226,1251,20,20,1],[1251,1258,16,17,1],[1258,1285,19,18,0],[1285,1292,8,10,1],[1292,1296,13,17,0],[1296,1335,18,18,0],[1335,1338,1,1,0]
    ];
    let seed = 7;
    const rand = () => (seed = (seed * 16807) % 2147483647) / 2147483647 * 2 - 1;
    const bars = segments => {
      let d = '';
      for (const [from, to, a, b, jitter] of segments) {
        for (let x = from; x < to; x++) {
          const amp = a + (b - a) * (x - from) / (to - from);
          const up = Math.min(72, Math.round(amp + rand() * jitter));
          const down = Math.min(72, Math.round(amp + rand() * jitter));
          d += `M${x} ${72 - up}h1V${72 + down}h-1z`;
        }
      }
      return d;
    };
    document.querySelectorAll('.wave').forEach(svg => {
      svg.innerHTML = `<path d="${bars(peaks)}" fill="#3232c8"/><path d="${bars(rms)}" fill="#6464dc"/><path d="M1338 0h1v143h-1z" fill="#808080"/><path d="M1339 0h4v143h-4z" fill="#d8d8d8"/>`;
    });

    // time fields, one box per digit
    document.querySelectorAll('.timebox').forEach(el => {
      const cells = [...'00h00m00.000s'].map(c => {
        if (c === '0') return `<input aria-label="${el.dataset.label} digit" value="0" maxlength="1" class="w-[10px] text-center text-[#0000c8]" />`;
        if (c === 'h') return '<span class="w-[14px] text-center">h</span>';
        if (c === 'm') return '<span class="w-[19px] text-center">m</span>';
        if (c === '.') return '<span class="w-[3px] text-[#0000c8]">.</span>';
        return '<span class="w-[11px] text-right">s</span>';
      }).join('');
      el.innerHTML = `<div class="flex h-[21px] w-[150px] items-center border border-[#808080] border-r-white border-b-white bg-[#c0c0c0] pl-px text-[12px]">${cells}<button aria-label="Format" class="ml-auto grid h-full w-[10px] place-items-center bg-[#f0f0f0]"><svg class="h-[5px] w-2"><path d="M0 0h8L4 5z"/></svg></button></div>`;
    });
  </script>
</body>
</html>
